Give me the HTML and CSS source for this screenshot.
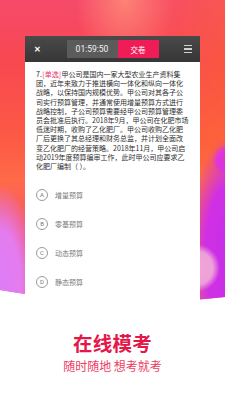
FILE: index.html
```html
<!DOCTYPE html>
<html lang="zh-CN">
<head>
<meta charset="utf-8">
<title>在线模考</title>
<link rel="stylesheet" href="styles.css">
</head>
<body>
<div class="hero">
  <div class="card">
    <div class="bar">
      <span class="close">✕</span>
      <div class="center">
        <span class="timer">01:59:50</span>
        <span class="submit">交卷</span>
      </div>
      <span class="menu"><i></i><i></i><i></i></span>
    </div>
    <div class="body">
      <p class="question"><span class="num">7.</span><span class="tag">[单选]</span>甲公司是国内一家大型农业生产资料集团，近年来致力于推进横向一体化和纵向一体化战略，以保持国内规模优势。甲公司对其各子公司实行预算管理，并通常使用增量预算方式进行战略控制，子公司预算需要经甲公司预算管理委员会批准后执行。2018年9月，甲公司在化肥市场低迷时期，收购了乙化肥厂。甲公司收购乙化肥厂后更换了其总经理和财务总监，并计划全面改变乙化肥厂的经营策略。2018年11月，甲公司启动2019年度预算编审工作，此时甲公司应要求乙化肥厂编制（ ）。</p>
      <ul class="options">
        <li class="option"><span class="letter">A</span><span class="text">增量预算</span></li>
        <li class="option"><span class="letter">B</span><span class="text">零基预算</span></li>
        <li class="option"><span class="letter">C</span><span class="text">动态预算</span></li>
        <li class="option"><span class="letter">D</span><span class="text">静态预算</span></li>
      </ul>
    </div>
  </div>
</div>
<div class="slogan">
  <h1 class="title">在线模考</h1>
  <p class="subtitle">随时随地 想考就考</p>
</div>
</body>
</html>
```

FILE: styles.css
```css
html, body {
  margin: 0;
  padding: 0;
}
body {
  width: 225px;
  height: 400px;
  overflow: hidden;
  background: #ffffff;
  font-family: "Noto Sans CJK SC", "Noto Sans", sans-serif;
}
.hero {
  position: relative;
  isolation: isolate;
  height: 310px;
  padding: 36px 25px 0;
  box-sizing: border-box;
}
.hero::before {
  content: "";
  position: absolute;
  inset: 0;
  z-index: -1;
  clip-path: polygon(0 0, 100% 0, 100% 297px, 50% 308px, 0 290px);
  background:
    radial-gradient(ellipse 50px 70px at 125px 0, rgba(255, 140, 120, 0.85), rgba(255, 140, 120, 0) 100%),
    radial-gradient(circle 24px at 196px 268px, #f2a6d6 0, #eea0da 70%, rgba(238, 160, 218, 0) 100%),
    radial-gradient(ellipse 45px 120px at 232px 255px, #c42ee8 0, #d030e4 60%, rgba(220, 50, 220, 0) 100%),
    radial-gradient(circle 16px at 228px 160px, #e52ed8 0, #e83ad0 70%, rgba(232, 58, 208, 0) 100%),
    radial-gradient(ellipse 38px 100px at 0 285px, #de7cf8 0, #e47cee 55%, rgba(240, 110, 200, 0) 100%),
    linear-gradient(90deg, rgba(255, 0, 0, 0) 60%, rgba(255, 110, 40, 0.35) 100%),
    linear-gradient(180deg, #f64a6a 0%, #f84850 20%, #fd5a44 45%, #ff6a48 58%, #f2507a 80%, #e860b8 100%);
}
.card {
  height: 100%;
  background: #ffffff;
  display: flex;
  flex-direction: column;
}
.bar {
  height: 26px;
  flex: none;
  display: grid;
  grid-template-columns: 1fr auto 1fr;
  align-items: center;
  background: linear-gradient(180deg, #4a4a4a, #363636);
}
.close {
  justify-self: start;
  padding-left: 9px;
  color: #ffffff;
  font-size: 8px;
  font-weight: bold;
  line-height: 1;
}
.center {
  display: flex;
  height: 18px;
}
.timer {
  width: 51px;
  display: flex;
  align-items: center;
  justify-content: center;
  background: #5b5b5b;
  color: #f2f2f2;
  font-family: Roboto, "Noto Sans", sans-serif;
  font-size: 8.5px;
}
.submit {
  width: 41px;
  display: flex;
  align-items: center;
  justify-content: center;
  background: #ef1c57;
  color: #ffffff;
  font-size: 7.5px;
}
.menu {
  justify-self: end;
  margin-right: 8px;
  width: 8px;
  display: flex;
  flex-direction: column;
  gap: 2px;
}
.menu i {
  display: block;
  height: 1.2px;
  background: #d0d0d0;
}
.body {
  padding: 8px 11px 0;
}
.question {
  margin: 0;
  font-size: 7px;
  line-height: 9.2px;
  color: #2e2e2e;
  text-align: left;
}
.num {
  margin-right: 0.5px;
}
.tag {
  color: #e8336a;
  margin-right: 0.5px;
}
.options {
  list-style: none;
  margin: 9px 0 0;
  padding: 0;
}
.option {
  height: 29px;
  display: flex;
  align-items: center;
}
.letter {
  width: 10px;
  height: 10px;
  border: 0.8px solid #9a9a9a;
  border-radius: 50%;
  display: flex;
  align-items: center;
  justify-content: center;
  font-family: Roboto, "Noto Sans", sans-serif;
  font-size: 6px;
  color: #777777;
}
.text {
  margin-left: 7px;
  font-size: 7px;
  color: #7a7a7a;
}
.slogan {
  text-align: center;
  padding-top: 21px;
}
.title {
  margin: 0;
  font-size: 19.5px;
  line-height: 23px;
  font-weight: bold;
  color: #e4174a;
  letter-spacing: 0.3px;
}
.subtitle {
  margin: 5px 0 0;
  font-size: 12px;
  line-height: 14px;
  color: #ee3d63;
}
```
